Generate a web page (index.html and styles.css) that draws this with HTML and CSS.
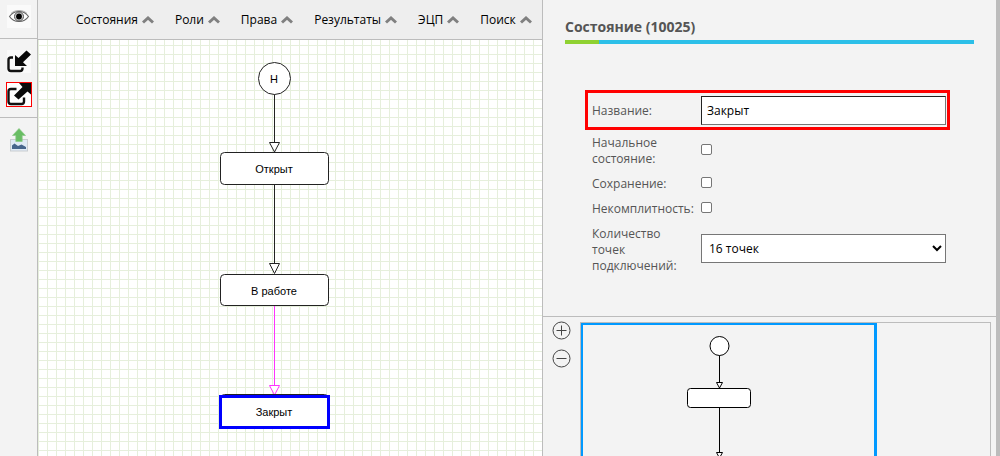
FILE: index.html
```html
<!DOCTYPE html>
<html lang="ru">
<head>
<meta charset="utf-8">
<title>Состояние (10025)</title>
<link rel="stylesheet" href="styles.css">
</head>
<body>
<div class="app">
  <nav class="tools" aria-label="Инструменты">
    <div class="tool-group tool-group-view">
      <button class="tool" aria-label="Просмотр">
        <svg width="24" height="23" viewBox="0 0 24 23">
          <rect width="24" height="23" fill="#fafafa"/>
          <path d="M2.500 11.500C7 4.800 17 4.800 21.500 11.500C17 18.200 7 18.200 2.500 11.500Z" fill="#fff" stroke="#666" stroke-width="1.100"/>
          <path d="M4 8.500C8 4.500 16 4.500 20 8.500" fill="none" stroke="#888" stroke-width=".7"/>
          <circle cx="12" cy="11.500" r="4.500" fill="#ccc" stroke="#555"/>
          <circle cx="12" cy="11.500" r="2.900" fill="#000"/>
        </svg>
      </button>
    </div>
    <div class="tool-group tool-group-io">
      <button class="tool" aria-label="Импорт">
        <svg width="24" height="23" viewBox="0 0 24 23">
          <rect width="24" height="23" fill="#fafafa"/>
          <path d="M6 7.500H4Q1.500 7.500 1.500 10V18.500Q1.500 21 4 21H13Q15.500 21 15.500 18.500V17.500" fill="none" stroke="#111" stroke-width="2.400"/>
          <path d="M8 5L11.500 8L19.500 .5L24 4.500L16 12.200L20 16H8Z" fill="#0a0a0a"/>
        </svg>
      </button>
      <button class="tool tool-marked" aria-label="Экспорт">
        <svg width="24" height="23" viewBox="0 0 24 23">
          <rect width="24" height="23" fill="#fff"/>
          <path d="M9.500 6H4Q1.500 6 1.500 8.500V18.500Q1.500 21 4 21H14.500Q17 21 17 18.500V14.500" fill="none" stroke="#111" stroke-width="2.400"/>
          <path d="M12 0H24V11.500L20.500 8.500L11.500 16.500L7 12.500L15.500 4Z" fill="#0a0a0a"/>
        </svg>
      </button>
    </div>
    <div class="tool-group tool-group-image">
      <button class="tool" aria-label="Сохранить изображение">
        <svg width="20" height="24" viewBox="0 0 20 24">
          <rect x="1.500" y="11.500" width="17" height="11.500" fill="#dfeaf5" stroke="#c9cdd0"/>
          <path d="M3 21V17.500L5.500 15.500L9 18L12.500 16.500L17 19V21Z" fill="#46658c"/>
          <path d="M10 .5L16.500 7.500H13.200V13.500H6.800V7.500H3.500Z" fill="#68bd63" stroke="#8bc987" stroke-width=".7"/>
        </svg>
      </button>
    </div>
  </nav>

  <main class="editor">
    <header class="menu">
      <button class="menu-item">Состояния <svg class="caret" width="12" height="8" viewBox="0 0 12 8"><path d="M1 6.500L6 2L11 6.500"/></svg></button>
      <button class="menu-item">Роли <svg class="caret" width="12" height="8" viewBox="0 0 12 8"><path d="M1 6.500L6 2L11 6.500"/></svg></button>
      <button class="menu-item">Права <svg class="caret" width="12" height="8" viewBox="0 0 12 8"><path d="M1 6.500L6 2L11 6.500"/></svg></button>
      <button class="menu-item">Результаты <svg class="caret" width="12" height="8" viewBox="0 0 12 8"><path d="M1 6.500L6 2L11 6.500"/></svg></button>
      <button class="menu-item">ЭЦП <svg class="caret" width="12" height="8" viewBox="0 0 12 8"><path d="M1 6.500L6 2L11 6.500"/></svg></button>
      <button class="menu-item">Поиск <svg class="caret" width="12" height="8" viewBox="0 0 12 8"><path d="M1 6.500L6 2L11 6.500"/></svg></button>
    </header>
    <div class="canvas">
      <svg class="diagram" width="504" height="416" viewBox="0 0 504 416">
        <g class="shape">
          <path d="M236.500 54V103M236.500 144V224"/>
          <path d="M231.500 102.500H241.500L236.500 112Z"/>
          <path d="M231.500 223.500H241.500L236.500 233.500Z"/>
          <circle cx="236.500" cy="38.500" r="16"/>
          <rect x="182.500" y="112.500" width="108" height="32" rx="4"/>
          <rect x="182.500" y="234.500" width="108" height="31" rx="4"/>
        </g>
        <g class="shape shape-active">
          <path d="M236.500 266V346"/>
          <path d="M231.500 345.500H241.500L236.500 355Z"/>
        </g>
        <rect class="shape" x="182.500" y="354.500" width="108" height="33" rx="4"/>
        <rect class="selection" x="182.500" y="356.500" width="108" height="31"/>
        <text x="236" y="43">Н</text>
        <text x="236" y="133">Открыт</text>
        <text x="236" y="255">В работе</text>
        <text x="236" y="376">Закрыт</text>
      </svg>
    </div>
  </main>

  <aside class="side">
    <section class="properties">
      <h1 class="title">Состояние (10025)</h1>
      <div class="rule"></div>
      <form class="form">
        <div class="row row-marked">
          <label for="name">Название:</label>
          <input class="field field-text" id="name" type="text" value="Закрыт">
        </div>
        <div class="row">
          <label for="initial">Начальное состояние:</label>
          <input class="check" id="initial" type="checkbox">
        </div>
        <div class="row">
          <label for="saving">Сохранение:</label>
          <input class="check" id="saving" type="checkbox">
        </div>
        <div class="row">
          <label for="incomplete">Некомплитность:</label>
          <input class="check" id="incomplete" type="checkbox">
        </div>
        <div class="row">
          <label for="points">Количество точек подключений:</label>
          <select class="field field-select" id="points"><option>16 точек</option></select>
        </div>
      </form>
    </section>
    <section class="overview">
      <div class="zoom">
        <button class="zoom-button" aria-label="Увеличить"><svg width="19" height="19" viewBox="0 0 19 19"><circle cx="9.500" cy="9.500" r="8.500"/><path d="M4.500 9.500H14.500M9.500 4.500V14.500"/></svg></button>
        <button class="zoom-button" aria-label="Уменьшить"><svg width="19" height="19" viewBox="0 0 19 19"><circle cx="9.500" cy="9.500" r="8.500"/><path d="M4.500 9.500H14.500"/></svg></button>
      </div>
      <div class="map">
        <div class="viewport">
          <svg width="290" height="131" viewBox="0 0 290 131">
            <g class="mini">
              <path d="M136.500 30V58M136.500 83V128"/>
              <path d="M133.500 57.500H139.500L136.500 63Z"/>
              <path d="M133.500 127.500H139.500L136.500 133Z"/>
              <circle cx="136.500" cy="21" r="9.500"/>
              <rect x="104.500" y="63.500" width="63" height="19" rx="3"/>
            </g>
          </svg>
        </div>
      </div>
    </section>
  </aside>
</div>
</body>
</html>
```
FILE: styles.css
```css
* {
  box-sizing: border-box;
}

body {
  margin: 0;
  font: 12px/16px "Open Sans", "Noto Sans", sans-serif;
  color: #000;
  background: #f3f3f3;
}

button {
  display: flex;
  align-items: center;
  margin: 0;
  padding: 0;
  border: 0;
  background: none;
  color: inherit;
  font: inherit;
}

.app {
  display: grid;
  grid-template-columns: 38px minmax(0, 1fr) 458px;
  height: 100vh;
  overflow: hidden;
}

.tools {
  border-right: 1px solid #bcbcbc;
}

.tool-group {
  display: flex;
  flex-direction: column;
  align-items: center;
  border-bottom: 1px solid #bcbcbc;
}

.tool-group-view {
  padding: 5px 0 10px;
}

.tool-group-io {
  gap: 9px;
  padding: 11px 0 10px;
}

.tool-group-image {
  padding-top: 10px;
  border-bottom: 0;
}

.tool-marked {
  border: 1px solid #f00;
}

.editor {
  display: flex;
  flex-direction: column;
  min-width: 0;
}

.menu {
  display: flex;
  align-items: center;
  gap: 21px;
  height: 40px;
  padding-left: 38px;
  background: #eee;
  border-bottom: 1px solid #bcbcbc;
}

.menu-item {
  gap: 4px;
}

.caret {
  fill: none;
  stroke: #808080;
  stroke-width: 3;
}

.canvas {
  flex: 1;
  overflow: hidden;
  background-color: #fff;
  background-image:
    linear-gradient(to right, #e6efdc 1px, transparent 1px),
    linear-gradient(to bottom, #e6efdc 1px, transparent 1px);
  background-size: 9px 9px;
  background-position: 0 5px;
}

.diagram {
  display: block;
}

.diagram text {
  font: 11px "Liberation Sans", Arial, sans-serif;
  text-anchor: middle;
}

.shape {
  fill: #fff;
  stroke: #222;
}

.shape-active {
  stroke: #f3f;
}

.selection {
  fill: none;
  stroke: #00f;
  stroke-width: 3;
}

.side {
  display: flex;
  flex-direction: column;
  min-height: 0;
  border-left: 1px solid #bcbcbc;
  border-right: 4px solid #bcbcbc;
}

.properties {
  padding: 18px 22px 42px;
}

.title {
  margin: 0;
  font-size: 14px;
  line-height: 18px;
  color: #555;
}

.rule {
  height: 4px;
  margin-top: 4px;
  background: linear-gradient(to right, #8fd131 34px, #2cbfe8 34px);
}

.form {
  display: flex;
  flex-direction: column;
  gap: 9px;
  padding: 46px 24px 0 20px;
  color: #555;
}

.row {
  display: grid;
  grid-template-columns: 100px minmax(0, 1fr);
  gap: 9px;
  align-items: center;
  padding: 0 4px 0 7px;
}

.row-marked {
  margin-bottom: -4px;
  padding: 3px 1px 2px 4px;
  border: 3px solid #f00;
}

.field {
  width: 100%;
  height: 29px;
  margin: 0;
  border: 1px solid #767676;
  border-radius: 0;
  background: #fff;
  color: #000;
  font: inherit;
}

.field-text {
  padding: 0 5px;
  border-top-color: #222;
  border-left-color: #222;
}

.field-select {
  margin-bottom: 4px;
  padding: 0 0 0 3px;
}

.check {
  appearance: none;
  width: 11px;
  height: 11px;
  margin: 0 0 3px;
  border: 1px solid #767676;
  border-radius: 2px;
  background: #fff;
}

.overview {
  display: flex;
  flex: 1;
  gap: 9px;
  min-height: 0;
  padding: 0 5px 0 9px;
  border-top: 1px solid #bcbcbc;
}

.zoom {
  display: flex;
  flex-direction: column;
  gap: 9px;
  padding-top: 4px;
}

.zoom-button {
  fill: none;
  stroke: #444;
}

.map {
  flex: 1;
  margin-top: 5px;
  overflow: hidden;
  border: 1px solid #bcbcbc;
  border-bottom: 0;
}

.viewport {
  width: 296px;
  height: 100%;
  border: solid #0099ff;
  border-width: 2px 3px 0 2px;
}

.mini {
  fill: #fff;
  stroke: #000;
}
```
